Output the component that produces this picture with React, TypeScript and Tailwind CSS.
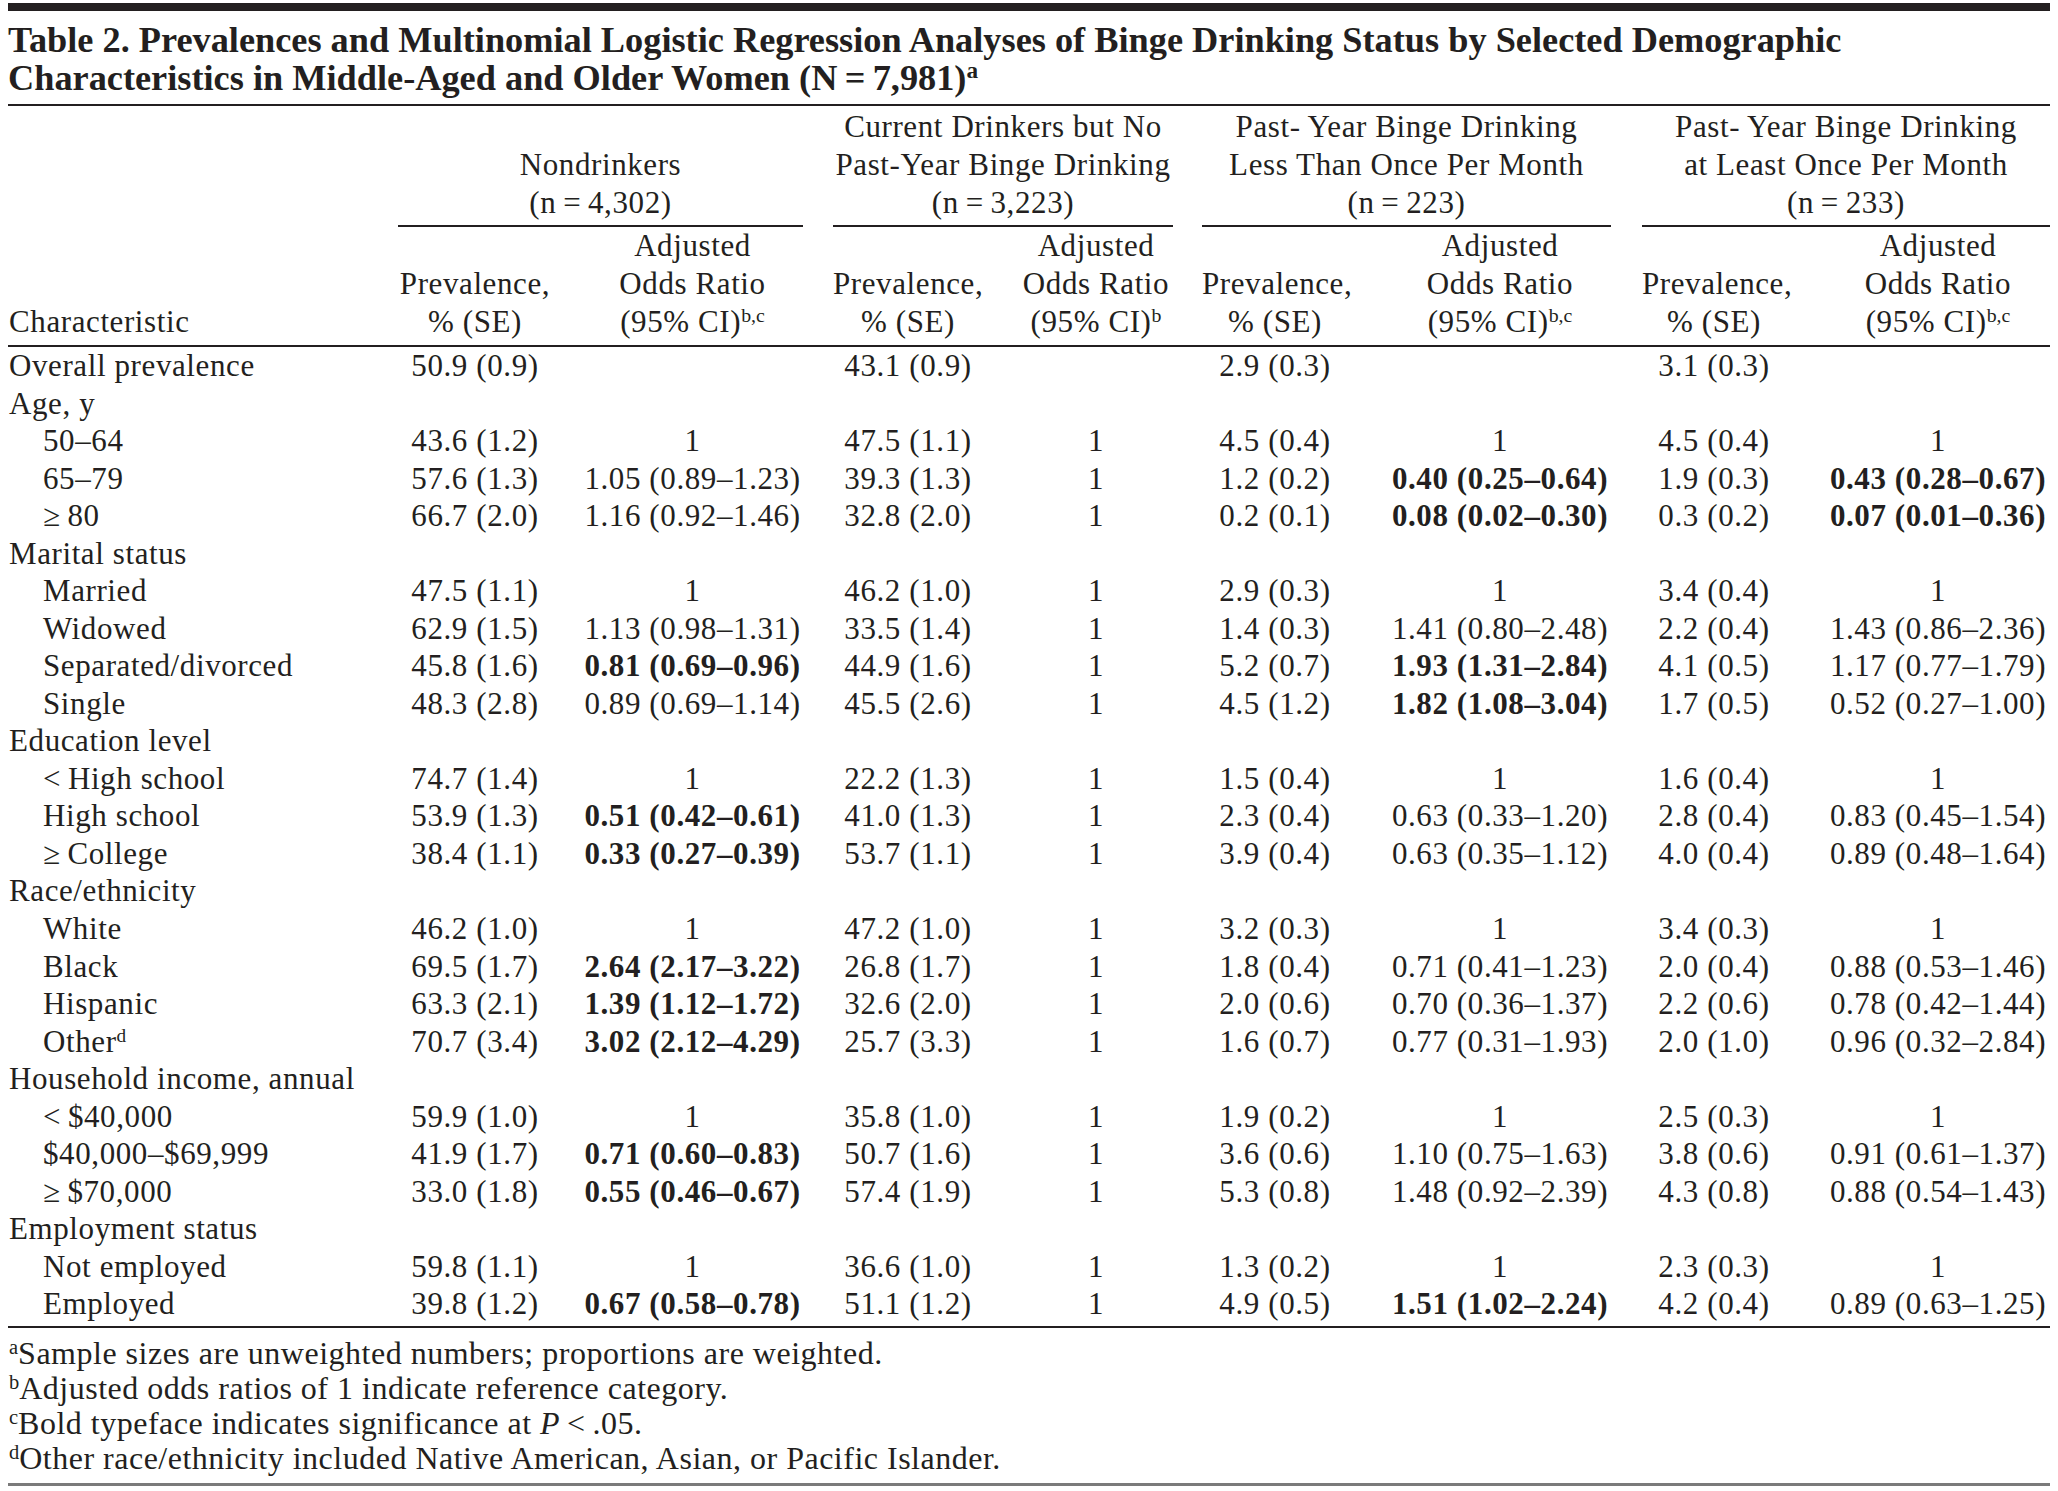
import React from "react";

const COLS = [
  "w-[154px]",
  "ml-[30px] w-[221px]",
  "ml-[30px] w-[150px]",
  "ml-[36px] w-[154px]",
  "ml-[29px] w-[146px]",
  "ml-[41px] w-[222px]",
  "ml-[31px] w-[144px]",
  "ml-[40px] w-[224px]",
];

const SPANS = [
  "w-[405px]",
  "ml-[30px] w-[340px]",
  "ml-[29px] w-[409px]",
  "ml-[31px] w-[408px]",
];

const T = "\u2009";

type Row = { label: React.ReactNode; sub?: boolean; cells?: string[] };

const rows: Row[] = [
  { label: "Overall prevalence", cells: ["50.9 (0.9)", "", "43.1 (0.9)", "", "2.9 (0.3)", "", "3.1 (0.3)", ""] },
  { label: "Age, y" },
  { label: "50–64", sub: true, cells: ["43.6 (1.2)", "1", "47.5 (1.1)", "1", "4.5 (0.4)", "1", "4.5 (0.4)", "1"] },
  { label: "65–79", sub: true, cells: ["57.6 (1.3)", "1.05 (0.89–1.23)", "39.3 (1.3)", "1", "1.2 (0.2)", "*0.40 (0.25–0.64)", "1.9 (0.3)", "*0.43 (0.28–0.67)"] },
  { label: `≥${T}80`, sub: true, cells: ["66.7 (2.0)", "1.16 (0.92–1.46)", "32.8 (2.0)", "1", "0.2 (0.1)", "*0.08 (0.02–0.30)", "0.3 (0.2)", "*0.07 (0.01–0.36)"] },
  { label: "Marital status" },
  { label: "Married", sub: true, cells: ["47.5 (1.1)", "1", "46.2 (1.0)", "1", "2.9 (0.3)", "1", "3.4 (0.4)", "1"] },
  { label: "Widowed", sub: true, cells: ["62.9 (1.5)", "1.13 (0.98–1.31)", "33.5 (1.4)", "1", "1.4 (0.3)", "1.41 (0.80–2.48)", "2.2 (0.4)", "1.43 (0.86–2.36)"] },
  { label: "Separated/divorced", sub: true, cells: ["45.8 (1.6)", "*0.81 (0.69–0.96)", "44.9 (1.6)", "1", "5.2 (0.7)", "*1.93 (1.31–2.84)", "4.1 (0.5)", "1.17 (0.77–1.79)"] },
  { label: "Single", sub: true, cells: ["48.3 (2.8)", "0.89 (0.69–1.14)", "45.5 (2.6)", "1", "4.5 (1.2)", "*1.82 (1.08–3.04)", "1.7 (0.5)", "0.52 (0.27–1.00)"] },
  { label: "Education level" },
  { label: `<${T}High school`, sub: true, cells: ["74.7 (1.4)", "1", "22.2 (1.3)", "1", "1.5 (0.4)", "1", "1.6 (0.4)", "1"] },
  { label: "High school", sub: true, cells: ["53.9 (1.3)", "*0.51 (0.42–0.61)", "41.0 (1.3)", "1", "2.3 (0.4)", "0.63 (0.33–1.20)", "2.8 (0.4)", "0.83 (0.45–1.54)"] },
  { label: `≥${T}College`, sub: true, cells: ["38.4 (1.1)", "*0.33 (0.27–0.39)", "53.7 (1.1)", "1", "3.9 (0.4)", "0.63 (0.35–1.12)", "4.0 (0.4)", "0.89 (0.48–1.64)"] },
  { label: "Race/ethnicity" },
  { label: "White", sub: true, cells: ["46.2 (1.0)", "1", "47.2 (1.0)", "1", "3.2 (0.3)", "1", "3.4 (0.3)", "1"] },
  { label: "Black", sub: true, cells: ["69.5 (1.7)", "*2.64 (2.17–3.22)", "26.8 (1.7)", "1", "1.8 (0.4)", "0.71 (0.41–1.23)", "2.0 (0.4)", "0.88 (0.53–1.46)"] },
  { label: "Hispanic", sub: true, cells: ["63.3 (2.1)", "*1.39 (1.12–1.72)", "32.6 (2.0)", "1", "2.0 (0.6)", "0.70 (0.36–1.37)", "2.2 (0.6)", "0.78 (0.42–1.44)"] },
  {
    label: (
      <>
        Other<sup className="text-[0.62em]">d</sup>
      </>
    ),
    sub: true,
    cells: ["70.7 (3.4)", "*3.02 (2.12–4.29)", "25.7 (3.3)", "1", "1.6 (0.7)", "0.77 (0.31–1.93)", "2.0 (1.0)", "0.96 (0.32–2.84)"],
  },
  { label: "Household income, annual" },
  { label: `<${T}$40,000`, sub: true, cells: ["59.9 (1.0)", "1", "35.8 (1.0)", "1", "1.9 (0.2)", "1", "2.5 (0.3)", "1"] },
  { label: "$40,000–$69,999", sub: true, cells: ["41.9 (1.7)", "*0.71 (0.60–0.83)", "50.7 (1.6)", "1", "3.6 (0.6)", "1.10 (0.75–1.63)", "3.8 (0.6)", "0.91 (0.61–1.37)"] },
  { label: `≥${T}$70,000`, sub: true, cells: ["33.0 (1.8)", "*0.55 (0.46–0.67)", "57.4 (1.9)", "1", "5.3 (0.8)", "1.48 (0.92–2.39)", "4.3 (0.8)", "0.88 (0.54–1.43)"] },
  { label: "Employment status" },
  { label: "Not employed", sub: true, cells: ["59.8 (1.1)", "1", "36.6 (1.0)", "1", "1.3 (0.2)", "1", "2.3 (0.3)", "1"] },
  { label: "Employed", sub: true, cells: ["39.8 (1.2)", "*0.67 (0.58–0.78)", "51.1 (1.2)", "1", "4.9 (0.5)", "*1.51 (1.02–2.24)", "4.2 (0.4)", "0.89 (0.63–1.25)"] },
];

const spanners: string[][] = [
  ["Nondrinkers", `(n${T}=${T}4,302)`],
  ["Current Drinkers but No", "Past-Year Binge Drinking", `(n${T}=${T}3,223)`],
  [`Past-${T}Year Binge Drinking`, "Less Than Once Per Month", `(n${T}=${T}223)`],
  [`Past-${T}Year Binge Drinking`, "at Least Once Per Month", `(n${T}=${T}233)`],
];

function Sup({ children }: { children: React.ReactNode }) {
  return <sup className="text-[0.64em] tracking-normal">{children}</sup>;
}

function PrevHead() {
  return (
    <>
      <div>Prevalence,</div>
      <div>% (SE)</div>
    </>
  );
}

function OrHead({ sup }: { sup: string }) {
  return (
    <>
      <div>Adjusted</div>
      <div>Odds Ratio</div>
      <div>
        (95% CI)<Sup>{sup}</Sup>
      </div>
    </>
  );
}

export default function App() {
  return (
    <div className="w-[2058px] h-[1491px] overflow-hidden bg-white text-[#231f20] font-['Liberation_Serif','Times_New_Roman',serif]">
      <div className="px-[8px]">
        <div className="mt-[3px] h-[8px] bg-[#231f20]" />
        <div className="mt-[11px] text-[36.3px] leading-[37.5px] font-bold">
          <div>
            Table 2. Prevalences and Multinomial Logistic Regression Analyses of Binge Drinking Status by Selected
            Demographic
          </div>
          <div>
            Characteristics in Middle-Aged and Older Women (N{T}={T}7,981)
            <Sup>a</Sup>
          </div>
        </div>
        <div className="mt-[7px] h-[2px] bg-[#231f20]" />

        {/* spanner header */}
        <div className="flex pt-[1.5px] text-[31px] leading-[38px] tracking-[0.6px]">
          <div className="w-[390px] shrink-0" />
          {spanners.map((lines, i) => (
            <div key={i} className={`${SPANS[i]} shrink-0 flex flex-col justify-end`}>
              {lines.map((l, j) => (
                <div key={j} className="text-center whitespace-nowrap">
                  {l}
                </div>
              ))}
              <div className="mt-[3px] h-[2px] bg-[#231f20]" />
            </div>
          ))}
        </div>

        {/* sub header */}
        <div className="flex items-end text-[31px] leading-[38px] tracking-[0.6px]">
          <div className="w-[390px] shrink-0 pl-[1px]">Characteristic</div>
          {COLS.map((c, i) => (
            <div key={i} className={`${c} shrink-0 text-center whitespace-nowrap`}>
              {i % 2 === 0 ? <PrevHead /> : <OrHead sup={i === 3 ? "b" : "b,c"} />}
            </div>
          ))}
        </div>
        <div className="mt-[4.5px] h-[2px] bg-[#231f20]" />

        {/* body */}
        <div className="text-[31px] tracking-[0.6px]">
          {rows.map((r, i) => (
            <div key={i} className="flex h-[37.54px] leading-[37.54px]">
              <div className={`w-[390px] shrink-0 whitespace-nowrap ${r.sub ? "pl-[35px]" : "pl-[1px]"}`}>{r.label}</div>
              {r.cells &&
                r.cells.map((c, j) => {
                  const bold = c.startsWith("*");
                  return (
                    <div
                      key={j}
                      className={`${COLS[j]} shrink-0 text-center whitespace-nowrap ${bold ? "font-bold" : ""}`}
                    >
                      {bold ? c.slice(1) : c}
                    </div>
                  );
                })}
            </div>
          ))}
        </div>
        <div className="mt-[3px] h-[2px] bg-[#231f20]" />

        {/* footnotes */}
        <div className="mt-[8px] text-[32px] leading-[35px] tracking-[0.5px] pl-[1px]">
          <div>
            <Sup>a</Sup>Sample sizes are unweighted numbers; proportions are weighted.
          </div>
          <div>
            <Sup>b</Sup>Adjusted odds ratios of 1 indicate reference category.
          </div>
          <div>
            <Sup>c</Sup>Bold typeface indicates significance at <span className="italic">P</span>
            {T}&lt;{T}.05.
          </div>
          <div>
            <Sup>d</Sup>Other race/ethnicity included Native American, Asian, or Pacific Islander.
          </div>
        </div>
        <div className="mt-[7px] h-[3px] bg-[#7a7a7a]" />
      </div>
    </div>
  );
}
